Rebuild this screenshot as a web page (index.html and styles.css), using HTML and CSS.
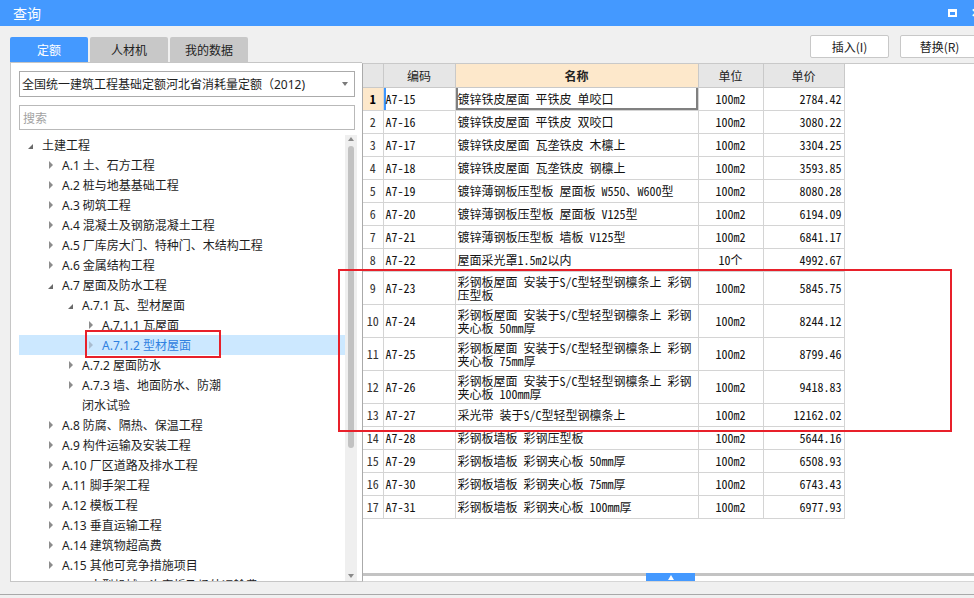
FILE: index.html
```html
<!DOCTYPE html>
<html lang="zh-CN">
<head>
<meta charset="utf-8">
<title>查询</title>
<link rel="stylesheet" href="styles.css">
</head>
<body>
<div class="titlebar">
  <span class="title">查询</span>
  <span class="tb-icons"><span class="max"></span><span class="close">✕</span></span>
</div>
<div class="content">
  <div class="left">
    <div class="tabs">
      <div class="tab active">定额</div>
      <div class="tab">人材机</div>
      <div class="tab">我的数据</div>
    </div>
    <div class="panel">
      <div class="select"><span>全国统一建筑工程基础定额河北省消耗量定额（2012)</span><span class="caret"></span></div>
      <div class="search">搜索</div>
      <div class="treewrap">
        <ul class="tree">
          <li class="l0"><i class="exp"></i>土建工程</li>
          <li class="l1"><i class="col"></i>A.1 土、石方工程</li>
          <li class="l1"><i class="col"></i>A.2 桩与地基基础工程</li>
          <li class="l1"><i class="col"></i>A.3 砌筑工程</li>
          <li class="l1"><i class="col"></i>A.4 混凝土及钢筋混凝土工程</li>
          <li class="l1"><i class="col"></i>A.5 厂库房大门、特种门、木结构工程</li>
          <li class="l1"><i class="col"></i>A.6 金属结构工程</li>
          <li class="l1"><i class="exp"></i>A.7 屋面及防水工程</li>
          <li class="l2"><i class="exp"></i>A.7.1 瓦、型材屋面</li>
          <li class="l3"><i class="col"></i>A.7.1.1 瓦屋面</li>
          <li class="l3 sel"><i class="col"></i>A.7.1.2 型材屋面</li>
          <li class="l2"><i class="col"></i>A.7.2 屋面防水</li>
          <li class="l2"><i class="col"></i>A.7.3 墙、地面防水、防潮</li>
          <li class="l2"><i class="none"></i>闭水试验</li>
          <li class="l1"><i class="col"></i>A.8 防腐、隔热、保温工程</li>
          <li class="l1"><i class="col"></i>A.9 构件运输及安装工程</li>
          <li class="l1"><i class="col"></i>A.10 厂区道路及排水工程</li>
          <li class="l1"><i class="col"></i>A.11 脚手架工程</li>
          <li class="l1"><i class="col"></i>A.12 模板工程</li>
          <li class="l1"><i class="col"></i>A.13 垂直运输工程</li>
          <li class="l1"><i class="col"></i>A.14 建筑物超高费</li>
          <li class="l1"><i class="col"></i>A.15 其他可竞争措施项目</li>
          <li class="l1"><i class="col"></i>A.16 大型机械一次安拆及场外运输费</li>
        </ul>
        <div class="vscroll">
          <span class="up"></span>
          <span class="vthumb"></span>
          <span class="vfill"></span>
          <span class="down"></span>
        </div>
      </div>
    </div>
  </div>
  <div class="right">
    <div class="buttons">
      <button class="btn">插入(I)</button>
      <button class="btn">替换(R)</button>
    </div>
    <div class="gridpane">
      <table class="grid">
        <colgroup><col class="c-no"><col class="c-code"><col class="c-name"><col class="c-unit"><col class="c-price"></colgroup>
        <thead>
          <tr><th></th><th>编码</th><th class="h-name">名称</th><th>单位</th><th>单价</th></tr>
        </thead>
        <tbody>
          <tr class="cur"><td class="no">1</td><td class="code">A7-15</td><td class="name">镀锌铁皮屋面 平铁皮 单咬口</td><td class="unit">100m2</td><td class="price">2784.42</td></tr>
          <tr><td class="no">2</td><td class="code">A7-16</td><td class="name">镀锌铁皮屋面 平铁皮 双咬口</td><td class="unit">100m2</td><td class="price">3080.22</td></tr>
          <tr><td class="no">3</td><td class="code">A7-17</td><td class="name">镀锌铁皮屋面 瓦垄铁皮 木檩上</td><td class="unit">100m2</td><td class="price">3304.25</td></tr>
          <tr><td class="no">4</td><td class="code">A7-18</td><td class="name">镀锌铁皮屋面 瓦垄铁皮 钢檩上</td><td class="unit">100m2</td><td class="price">3593.85</td></tr>
          <tr><td class="no">5</td><td class="code">A7-19</td><td class="name">镀锌薄钢板压型板 屋面板 W550、W600型</td><td class="unit">100m2</td><td class="price">8080.28</td></tr>
          <tr><td class="no">6</td><td class="code">A7-20</td><td class="name">镀锌薄钢板压型板 屋面板 V125型</td><td class="unit">100m2</td><td class="price">6194.09</td></tr>
          <tr><td class="no">7</td><td class="code">A7-21</td><td class="name">镀锌薄钢板压型板 墙板 V125型</td><td class="unit">100m2</td><td class="price">6841.17</td></tr>
          <tr><td class="no">8</td><td class="code">A7-22</td><td class="name">屋面采光罩1.5m2以内</td><td class="unit">10个</td><td class="price">4992.67</td></tr>
          <tr class="tall"><td class="no">9</td><td class="code">A7-23</td><td class="name">彩钢板屋面 安装于S/C型轻型钢檩条上 彩钢<br>压型板</td><td class="unit">100m2</td><td class="price">5845.75</td></tr>
          <tr class="tall"><td class="no">10</td><td class="code">A7-24</td><td class="name">彩钢板屋面 安装于S/C型轻型钢檩条上 彩钢<br>夹心板 50mm厚</td><td class="unit">100m2</td><td class="price">8244.12</td></tr>
          <tr class="tall"><td class="no">11</td><td class="code">A7-25</td><td class="name">彩钢板屋面 安装于S/C型轻型钢檩条上 彩钢<br>夹心板 75mm厚</td><td class="unit">100m2</td><td class="price">8799.46</td></tr>
          <tr class="tall"><td class="no">12</td><td class="code">A7-26</td><td class="name">彩钢板屋面 安装于S/C型轻型钢檩条上 彩钢<br>夹心板 100mm厚</td><td class="unit">100m2</td><td class="price">9418.83</td></tr>
          <tr><td class="no">13</td><td class="code">A7-27</td><td class="name">采光带 装于S/C型轻型钢檩条上</td><td class="unit">100m2</td><td class="price">12162.02</td></tr>
          <tr><td class="no">14</td><td class="code">A7-28</td><td class="name">彩钢板墙板 彩钢压型板</td><td class="unit">100m2</td><td class="price">5644.16</td></tr>
          <tr><td class="no">15</td><td class="code">A7-29</td><td class="name">彩钢板墙板 彩钢夹心板 50mm厚</td><td class="unit">100m2</td><td class="price">6508.93</td></tr>
          <tr><td class="no">16</td><td class="code">A7-30</td><td class="name">彩钢板墙板 彩钢夹心板 75mm厚</td><td class="unit">100m2</td><td class="price">6743.43</td></tr>
          <tr><td class="no">17</td><td class="code">A7-31</td><td class="name">彩钢板墙板 彩钢夹心板 100mm厚</td><td class="unit">100m2</td><td class="price">6977.93</td></tr>
        </tbody>
      </table>
      <div class="gridfill"></div>
      <div class="hscroll">
        <span class="htrack lead"></span>
        <span class="hthumb"><span class="tri"></span></span>
        <span class="htrack rest"></span>
      </div>
    </div>
  </div>
</div>
<div class="footer"></div>
<div class="bottomline"></div>

<div class="mark mark-tree"></div>
<div class="mark mark-grid"></div>
</body>
</html>
```

FILE: styles.css
```css
* { box-sizing: border-box; margin: 0; padding: 0; }
html, body { width: 974px; height: 598px; overflow: hidden; }
body {
  background: #f0f0f0;
  font-family: "Noto Sans", "Noto Sans CJK SC", sans-serif;
  font-size: 12px;
  color: #1e1e1e;
  position: relative;
}

/* title bar */
.titlebar {
  height: 26px;
  background: #4499ff;
  color: #fff;
  display: flex;
  align-items: center;
  padding-left: 13px;
}
.title { flex: 1; font-family: "Noto Sans CJK SC", sans-serif; font-size: 14px; line-height: 26px; }
.tb-icons { display: flex; align-items: center; gap: 14px; margin-right: -9px; }
.max { width: 9px; height: 8px; border: 2px solid #fff; border-top-width: 3px; }
.close { font-size: 12px; font-weight: bold; width: 12px; line-height: 12px; }

/* layout */
.content { display: flex; height: 556px; }
.left { width: 362px; flex-shrink: 0; padding-left: 10px; display: flex; flex-direction: column; }
.right { flex: 1; display: flex; flex-direction: column; min-width: 0; }

/* tabs */
.tabs { display: flex; gap: 2px; margin-top: 11px; height: 25px; }
.tab {
  width: 78px;
  background: #c8c8c8;
  border-radius: 2px 2px 0 0;
  text-align: center;
  line-height: 25px;
  font-family: "Noto Sans CJK SC", sans-serif;
  color: #222;
}
.tab.active { background: #4499ff; color: #fff; }

/* left panel */
.panel {
  flex: 1;
  background: #fff;
  border: 1px solid #c6c6c6;
  border-right: none;
  padding: 8px 0 0 8px;
  display: flex;
  flex-direction: column;
  min-height: 0;
}
.select {
  width: 336px;
  height: 26px;
  border: 1px solid #ababab;
  display: flex;
  align-items: center;
  justify-content: space-between;
  padding: 0 6px 0 2px;
  white-space: nowrap;
}
.caret { width: 0; height: 0; border-top: 4px solid #7a7a7a; border-left: 3.5px solid transparent; border-right: 3.5px solid transparent; }
.search {
  width: 336px;
  height: 25px;
  margin-top: 8px;
  border: 1px solid #b9b9b9;
  color: #a2a2a2;
  padding-left: 3px;
  line-height: 23px;
  font-family: "Noto Sans CJK SC", sans-serif;
}
.treewrap { margin-top: 5px; flex: 1; display: flex; overflow: hidden; min-height: 0; }
.tree { list-style: none; width: 326px; flex-shrink: 0; }
.tree li {
  height: 20px;
  display: flex;
  align-items: center;
  white-space: nowrap;
  padding-left: 9px;
}
.tree li.l1 { padding-left: 29px; }
.tree li.l2 { padding-left: 49px; }
.tree li.l3 { padding-left: 69px; }
.tree li.sel { background: #cce8ff; color: #2f80e0; }
.tree i { width: 14px; height: 20px; flex-shrink: 0; display: flex; align-items: center; }
.tree i.col::before {
  content: "";
  width: 0; height: 0;
  border-left: 4px solid #8c8c8c;
  border-top: 4px solid transparent;
  border-bottom: 4px solid transparent;
  margin-left: 1px;
}
.tree li.sel i.col::before { border-left-color: #a9bccf; }
.tree i.exp::before {
  content: "";
  width: 0; height: 0;
  border-right: 5px solid #6a6a6a;
  border-top: 5px solid transparent;
  margin-top: 2px;
}
.vscroll {
  width: 12px;
  flex-shrink: 0;
  background: #efefef;
  display: flex;
  flex-direction: column;
  align-items: center;
  padding: 2px 0 3px;
}
.vscroll .up { width: 0; height: 0; border-bottom: 4px solid #8a8a8a; border-left: 3.5px solid transparent; border-right: 3.5px solid transparent; }
.vscroll .vthumb { width: 6px; height: 302px; margin-top: 5px; background: #c2c2c2; border-radius: 3px; }
.vscroll .vfill { flex: 1; }
.vscroll .down { width: 0; height: 0; border-top: 4px solid #8a8a8a; border-left: 3.5px solid transparent; border-right: 3.5px solid transparent; }

/* buttons */
.buttons { display: flex; gap: 11px; margin-top: 9px; height: 23px; padding-left: 448px; }
.btn {
  width: 79px;
  height: 23px;
  flex-shrink: 0;
  background: #fff;
  border: 1px solid #c8c8c8;
  border-radius: 2px;
  font-family: "Noto Sans CJK SC", sans-serif;
  font-size: 12px;
  color: #222;
}

/* grid pane */
.gridpane {
  margin-top: 5px;
  flex: 1;
  background: #fff;
  border-top: 1px solid #c9c9c9;
  border-left: 1px solid #aaaaaa;
  border-bottom: 1px solid #d6d6d6;
  display: flex;
  flex-direction: column;
  min-height: 0;
}
.grid {
  border-collapse: collapse;
  table-layout: fixed;
  width: 481px;
  font-family: "Noto Sans Mono CJK SC", "Noto Sans CJK SC", sans-serif;
  font-size: 12px;
  color: #111;
}
.c-no { width: 20px; }
.c-code { width: 72px; }
.c-name { width: 243px; }
.c-unit { width: 65px; }
.c-price { width: 81px; }
.grid th {
  height: 23px;
  background: #e6e6e6;
  border: 1px solid #c9c9c9;
  border-top: none;
  font-weight: normal;
  font-family: "Noto Sans CJK SC", sans-serif;
  color: #222;
}
.grid th:first-child { border-left: none; }
.grid th.h-name { background: #fde8cb; font-weight: bold; }
.grid td {
  height: 23px;
  border: 1px solid #d4d4d4;
  white-space: nowrap;
  overflow: hidden;
  vertical-align: middle;
  line-height: 13px;
}
.grid td:first-child { border-left: none; }
.grid tr.tall td { height: 33px; }
.grid td.no { text-align: center; color: #333; }
.grid td.code { padding-left: 2px; }
.grid td.name { padding-left: 2px; }
.grid td.unit { text-align: center; }
.grid td.price { text-align: right; padding-right: 2px; }
.grid tr.cur td.no { background: #fde8cb; font-weight: bold; color: #000; }
.grid tr.cur td.code { box-shadow: inset 2px 0 0 #3c96ff; }
.grid tr.cur td.name { box-shadow: inset 2px 0 0 #808080, inset -2px -2px 0 #808080; border-top-color: #7fb2ee; }

.gridfill { flex: 1; }
.hscroll { height: 8px; display: flex; align-items: flex-start; }
.htrack { height: 3px; background: #c3c3c3; }
.htrack.lead { width: 283px; }
.htrack.rest { flex: 1; }
.hthumb { width: 49px; height: 8px; background: #4499ff; display: flex; justify-content: center; align-items: center; }
.hthumb .tri { width: 0; height: 0; border-bottom: 5px solid #fff; border-left: 3px solid transparent; border-right: 3px solid transparent; }

/* footer */
.footer { height: 12px; }
.bottomline { height: 4px; border-top: 1px solid #a9a9a9; }

/* red annotation rectangles (overlay) */
.mark { position: absolute; border: 2px solid #e8202a; pointer-events: none; }
.mark-tree { left: 85px; top: 330px; width: 136px; height: 28px; }
.mark-grid { left: 338px; top: 269px; width: 614px; height: 163px; }
```
